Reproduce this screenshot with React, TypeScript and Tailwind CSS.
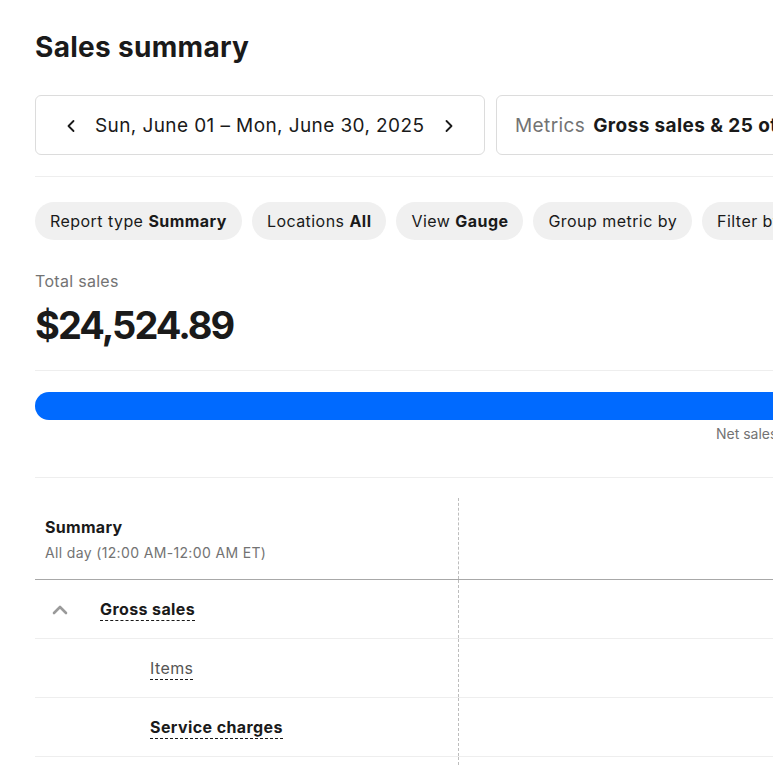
import { ChevronLeft, ChevronRight, ChevronUp } from "lucide-react"

const chips = [
  { label: "Report type", value: "Summary" },
  { label: "Locations", value: "All" },
  { label: "View", value: "Gauge" },
  { label: "Group metric by", value: "" },
  { label: "Filter by", value: "" },
]

function Chip({ label, value }: { label: string; value: string }) {
  return (
    <div className="h-[38px] shrink-0 rounded-full bg-[#f0f0f0] px-[15px] flex items-center text-[16px] tracking-[0.45px] text-[#1a1a1a] whitespace-nowrap">
      {label}
      {value && <span className="ml-[5px] font-bold">{value}</span>}
    </div>
  )
}

export default function App() {
  return (
    <div
      className="w-[773px] h-[767px] overflow-hidden bg-white text-[#1a1a1a]"
      style={{ fontFamily: "Inter, 'Noto Sans', sans-serif" }}
    >
      <div className="w-[1200px] pl-[35px] pr-[35px]">
        {/* Header */}
        <h1 className="pt-[28px] text-[28px] font-bold leading-[38px] tracking-[0.3px]">Sales summary</h1>

        <div className="mt-[29px] flex gap-[11px]">
          <div className="h-[60px] w-[450px] rounded-[6px] border border-[#dcdcdc] flex items-center pl-[25px] pr-[25px] pt-[2px]">
            <ChevronLeft size={20} strokeWidth={2.2} />
            <span className="ml-[14px] text-[19px] tracking-[0.4px] whitespace-nowrap">Sun, June 01 – Mon, June 30, 2025</span>
            <ChevronRight size={20} strokeWidth={2.2} className="ml-auto" />
          </div>
          <div className="h-[60px] w-[500px] rounded-[6px] border border-[#dcdcdc] flex items-center pl-[18px] pr-[19px] pt-[2px] text-[19px] tracking-[0.4px] whitespace-nowrap">
            <span className="text-[#737373]">Metrics</span>
            <span className="ml-[8px] font-bold">Gross sales &amp; 25 others</span>
          </div>
        </div>

        <div className="mt-[21px] border-t border-[#eeeeee]" />

        {/* Filter chips */}
        <div className="mt-[25px] flex gap-[10px]">
          {chips.map((c) => (
            <Chip key={c.label} label={c.label} value={c.value} />
          ))}
        </div>

        {/* Total */}
        <div className="mt-[30px] text-[16px] tracking-[0.3px] text-[#737373] leading-[22px]">Total sales</div>
        <div className="mt-[11px] text-[38px] font-bold leading-[44px] tracking-[-2px]">$24,524.89</div>

        <div className="mt-[23px] border-t border-[#eeeeee]" />

        {/* Gauge */}
        <div className="mt-[21px] h-[28px] w-full rounded-l-full bg-[#006aff]" />
        <div className="mt-[5px] pl-[681px] text-[14px] text-[#737373] leading-[18px]">Net sales</div>

        <div className="mt-[34px] border-t border-[#eeeeee]" />

        {/* Table */}
        <div className="mt-[20px]">
          <div className="flex">
            <div className="w-[424px] shrink-0 border-r border-dashed border-[#bdbdbd] pl-[10px] pt-[19px] pb-[17px]">
              <div className="text-[16px] font-bold tracking-[0.3px] leading-[20px]">Summary</div>
              <div className="mt-[7px] text-[14px] tracking-[0.35px] text-[#737373] leading-[18px]">All day (12:00 AM-12:00 AM ET)</div>
            </div>
            <div className="flex-1" />
          </div>
          <div className="border-t border-[#a8a8a8]" />

          <div className="flex border-b border-[#eeeeee]">
            <div className="w-[424px] shrink-0 h-[58px] border-r border-dashed border-[#bdbdbd] flex items-center pt-[2px]">
              <ChevronUp size={24} strokeWidth={2.6} className="ml-[13px] text-[#9a9a9a]" />
              <span className="ml-[28px] text-[16px] font-bold tracking-[0.4px] border-b border-dashed border-[#1a1a1a] leading-[21px]">Gross sales</span>
            </div>
          </div>
          <div className="flex border-b border-[#eeeeee]">
            <div className="w-[424px] shrink-0 h-[58px] border-r border-dashed border-[#bdbdbd] flex items-center pl-[115px] pt-[2px]">
              <span className="text-[16px] tracking-[0.4px] text-[#555555] border-b border-dashed border-[#1a1a1a] leading-[21px]">Items</span>
            </div>
          </div>
          <div className="flex border-b border-[#eeeeee]">
            <div className="w-[424px] shrink-0 h-[58px] border-r border-dashed border-[#bdbdbd] flex items-center pl-[115px] pt-[2px]">
              <span className="text-[16px] font-bold tracking-[0.4px] border-b border-dashed border-[#1a1a1a] leading-[21px]">Service charges</span>
            </div>
          </div>
          <div className="flex">
            <div className="w-[424px] shrink-0 h-[58px] border-r border-dashed border-[#bdbdbd]" />
          </div>
        </div>
      </div>
    </div>
  )
}
